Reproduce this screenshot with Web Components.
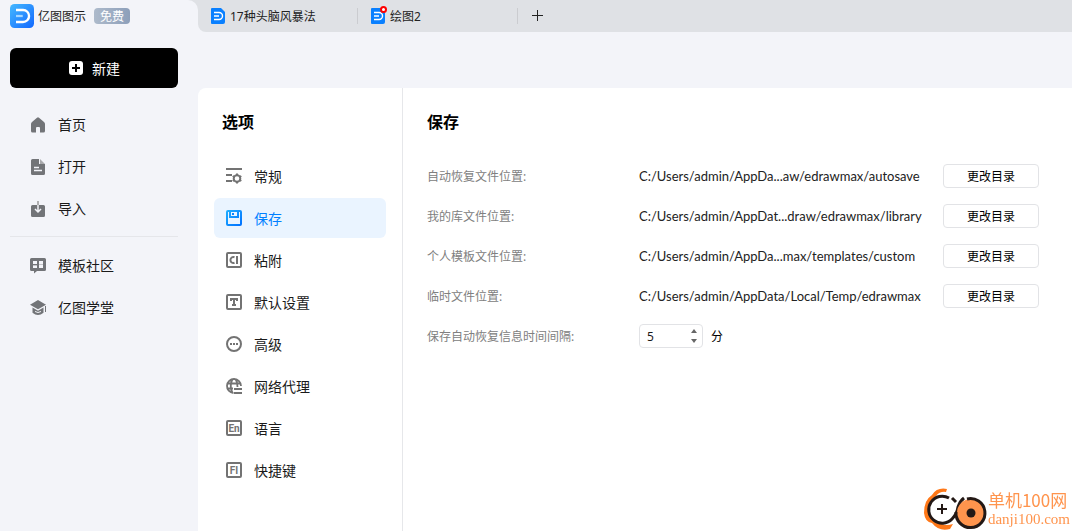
<!DOCTYPE html>
<html lang="zh-CN">
<head>
<meta charset="utf-8">
<title>亿图图示</title>
<style>
html, body { height: 100%; margin: 0; }
body { font: 14px/20px "Noto Sans", "Noto Sans CJK SC", sans-serif; color: #1a1a1a; background: #f3f4f9; }
</style>
</head>
<body>
<edraw-app></edraw-app>
<script>
const define = (name, html, init) => {
  const template = document.createElement('template');
  template.innerHTML = '<style>*{box-sizing:border-box}</style>' + html;
  customElements.define(name, class extends HTMLElement {
    constructor() {
      super();
      this.attachShadow({ mode: 'open' }).append(template.content.cloneNode(true));
    }
    connectedCallback() { if (init) init.call(this, this.shadowRoot); }
  });
};

const frame = '<rect x="1" y="1" width="14" height="14" rx="1" fill="none" stroke="currentColor" stroke-width="2"/>';
const letters = (t) => frame + `<text x="8" y="12" text-anchor="middle" font-family="Roboto, sans-serif" font-weight="700" font-size="10" fill="currentColor">${t}</text>`;
const icons = {
  home: '<path fill="currentColor" d="M7 .8a1.500 1.500 0 0 1 2 0l5 4.300q1 .9 1 2V14a1.500 1.500 0 0 1-1.500 1.500H10V11a1 1 0 0 0-1-1H7a1 1 0 0 0-1 1v4.500H2.500A1.500 1.500 0 0 1 1 14V7.100q0-1.100 1-2z"/>',
  file: '<path fill="currentColor" d="M2.500 0H9v4.500q0 .5.500.5H15v9.500a1.500 1.500 0 0 1-1.500 1.500h-11A1.500 1.500 0 0 1 1 14.500v-13A1.500 1.500 0 0 1 2.500 0z"/><path fill="#a9aaad" d="M10 0l5 5h-5z"/><path stroke="#f3f4f9" stroke-width="1.300" d="M4 8.500h5M4 11.500h8"/>',
  import: '<path fill="currentColor" d="M2.500 4h11A1.500 1.500 0 0 1 15 5.500v9a1.500 1.500 0 0 1-1.500 1.500h-11A1.500 1.500 0 0 1 1 14.500v-9A1.500 1.500 0 0 1 2.500 4z"/><path d="M8 0v4" stroke="#999" stroke-width="1.500"/><path d="M8 4v7M5 8l3 3 3-3" fill="none" stroke="#f3f4f9" stroke-width="1.500"/>',
  template: '<path fill="currentColor" d="M1.500 0h13A1.500 1.500 0 0 1 16 1.500v10a1.500 1.500 0 0 1-1.500 1.500H7l-3 2.500V13H1.500A1.500 1.500 0 0 1 0 11.500v-10A1.500 1.500 0 0 1 1.500 0z"/><path fill="#f3f4f9" d="M3 3h4v3H3zM3 7h4v3H3zM9 3h4v3H9zM9 7h4v3H9z"/><path fill="#c4c5c9" d="M3 7h4v1H3zM9 6h4v1H9z"/>',
  school: '<path fill="currentColor" d="M8 0l8 4.700-8 4.600L0 4.700zM2.500 7.500L8 10.700l5.500-3.200v5.200Q8 17.300 2.500 12.700zM15 6h1v6h-1z"/><path d="M5 11.500q3 2 6 0" fill="none" stroke="#f3f4f9"/>',
  general: '<path d="M0 1h16M0 7h6M0 13h6" fill="none" stroke="currentColor" stroke-width="2"/><circle cx="11" cy="10.500" r="3.300" fill="none" stroke="currentColor" stroke-width="2"/><path d="M11 5.500v2M11 13.500v2M6.700 8l1.700 1M13.600 12l1.700 1M6.700 13l1.700-1M13.600 9l1.700-1" stroke="currentColor" stroke-width="2"/>',
  save: '<defs><linearGradient id="g" gradientUnits="userSpaceOnUse" x2="16" y2="16"><stop stop-color="#20b0ff"/><stop offset="1" stop-color="#006fff"/></linearGradient></defs><rect x="1" y="1" width="14" height="14" rx="1" fill="none" stroke="url(#g)" stroke-width="2"/><path d="M4 1v6h8V1" fill="none" stroke="url(#g)" stroke-width="2"/><path d="M6 3h2v2H6z" fill="#0a84ff"/>',
  attach: frame + '<path d="M8.500 5.200a3 3 0 1 0 0 5.600M11 4v8" fill="none" stroke="currentColor" stroke-width="2"/>',
  defaults: frame + '<path d="M5 7V5h6v2M8 5v6M6 11h4" fill="none" stroke="currentColor" stroke-width="2"/>',
  advanced: '<circle cx="8" cy="8" r="7" fill="none" stroke="currentColor" stroke-width="2"/><path d="M4 7h2v2H4zM7 7h2v2H7zM10 7h2v2h-2z" fill="currentColor"/>',
  proxy: '<path d="M7.500 15A7 7 0 1 1 15 8M1.500 5.500h13M1.500 10.500H7M6.500 15Q3 8 6.500 1M9.500 1Q11.500 4 11.500 9" fill="none" stroke="currentColor" stroke-width="1.800"/><path d="M8 11h8M8 15h8" stroke="currentColor" stroke-width="2"/>',
  language: letters('En'),
  shortcut: letters('FI'),
  plus: '<rect x="1" y="1" width="14" height="14" rx="3" fill="#fff"/><path d="M8 4v8M4 8h8" stroke="#000" stroke-width="2"/>',
  add: '<path d="M7.500 2v11M2 7.500h11" stroke="#222" stroke-width="1"/>',
  doc: '<path d="M2 0h9l4 4v10a2 2 0 0 1-2 2H2a1 1 0 0 1-1-1V1a1 1 0 0 1 1-1z" fill="#0a80ff"/><path d="M4 4.500h5a3.500 3.500 0 0 1 0 7H4M4 8h5" fill="none" stroke="#fff" stroke-width="1.400"/>',
  logo: '<defs><linearGradient id="l" x2="1" y2="1"><stop stop-color="#45b9ff"/><stop offset="1" stop-color="#1268ff"/></linearGradient></defs><rect width="16" height="16" rx="3" fill="url(#l)"/><path d="M4 4h4.700a4 4 0 0 1 0 8H4" fill="none" stroke="#fff" stroke-width="1.600"/><path d="M4 8h4.500" stroke="#a5d6ff" stroke-width="1.500"/>'
};
const draw = (icon, name) => { icon.shadowRoot.querySelector('svg').innerHTML = icons[name]; };

define('ed-icon', `<style>
:host { display: block; flex: none; width: 16px; height: 16px; }
:host([name=logo]) { width: 24px; height: 24px; }
svg { display: block; width: 100%; height: 100%; overflow: visible; }
</style><svg viewBox="0 0 16 16" aria-hidden="true"></svg>`, function () {
  if (this.hasAttribute('name')) draw(this, this.getAttribute('name'));
});

const linkInit = function (root) {
  const icon = root.querySelector('ed-icon');
  customElements.upgrade(icon);
  icon.setAttribute('name', this.getAttribute('icon'));
  draw(icon, this.getAttribute('icon'));
};

define('side-link', `<style>
:host { display: block; }
a { display: flex; align-items: center; gap: 12px; height: 42px; padding-left: 20px; color: inherit; text-decoration: none; }
ed-icon { color: #727478; }
</style><a href="#"><ed-icon></ed-icon><span><slot></slot></span></a>`, linkInit);

define('option-link', `<style>
:host { display: block; }
a { display: flex; align-items: center; gap: 12px; height: 40px; padding-left: 12px; border-radius: 6px; color: inherit; text-decoration: none; }
ed-icon { color: #737373; }
span { padding-top: 2px; }
:host([selected]) a { background: #eaf4ff; color: #0080ff; }
</style><a href="#"><ed-icon></ed-icon><span><slot></slot></span></a>`, linkInit);

define('app-sidebar', `<style>
:host { display: flex; flex-direction: column; flex: none; width: 198px; padding: 4px 20px 0 10px; background: #f3f4f9; border-top-right-radius: 10px; }
header { display: flex; align-items: center; height: 24px; font-size: 12px; gap: 4px; }
.title, .new { padding-top: 2px; }
.free { margin-left: 4px; width: 36px; height: 16px; line-height: 18px; text-align: center; color: #fff; border-radius: 4px; background: linear-gradient(90deg, #adbacb, #8d9fba); }
button { display: flex; align-items: center; justify-content: center; gap: 8px; height: 40px; margin: 20px 0 16px; border: 0; border-radius: 6px; background: #000; color: #fff; font: inherit; }
hr { width: 100%; margin: 6px 0 8px; border: 0; border-top: 1px solid #e5e6ea; }
</style>
<header><ed-icon name="logo"></ed-icon><span class="title">亿图图示</span><span class="free">免费</span></header>
<button type="button"><ed-icon name="plus"></ed-icon><span class="new">新建</span></button>
<nav><side-link icon="home">首页</side-link><side-link icon="file">打开</side-link><side-link icon="import">导入</side-link></nav>
<hr>
<nav><side-link icon="template">模板社区</side-link><side-link icon="school">亿图学堂</side-link></nav>`);

define('doc-tab', `<style>
:host { display: block; width: 160px; }
button { display: flex; align-items: center; gap: 4px; width: 100%; height: 16px; padding: 0 0 0 12px; border: 0; border-right: 1px solid #cbccd0; background: none; color: #222; font: inherit; }
.mark { position: relative; }
.text { padding-top: 2px; }
i { display: none; position: absolute; right: -1px; top: -2px; width: 7px; height: 7px; border: 2px solid #f00; border-radius: 50%; background: #fff; }
:host([modified]) i { display: block; }
</style><button type="button"><span class="mark"><ed-icon name="doc"></ed-icon><i></i></span><span class="text"><slot></slot></span></button>`);

define('tab-bar', `<style>
:host { display: flex; align-items: center; height: 32px; background: #dfe1e5; border-bottom-left-radius: 8px; font-size: 12px; }
.add { padding: 0 12px; border: 0; background: none; }
</style><doc-tab>17种头脑风暴法</doc-tab><doc-tab modified>绘图2</doc-tab><button class="add" type="button" aria-label="新建标签"><ed-icon name="add"></ed-icon></button>`);

define('option-nav', `<style>
:host { display: block; flex: none; width: 205px; padding: 24px 16px; border-right: 1px solid #e6e7ea; }
h2 { margin: 0 0 24px 8px; font-size: 16px; line-height: 20px; color: #000; }
nav { display: grid; gap: 2px; }
</style><h2>选项</h2>
<nav>
<option-link icon="general">常规</option-link>
<option-link icon="save" selected>保存</option-link>
<option-link icon="attach">粘附</option-link>
<option-link icon="defaults">默认设置</option-link>
<option-link icon="advanced">高级</option-link>
<option-link icon="proxy">网络代理</option-link>
<option-link icon="language">语言</option-link>
<option-link icon="shortcut">快捷键</option-link>
</nav>`);

define('setting-row', `<style>
:host { display: grid; grid-template-columns: 212px 304px 96px; align-items: center; height: 24px; }
.label { padding-top: 2px; color: #808080; }
.path { font-family: Lato, "Noto Sans", sans-serif; font-size: 13px; white-space: nowrap; color: #222; }
button { height: 24px; padding: 2px 0 0; border: 1px solid #e2e3e6; border-radius: 4px; background: #fff; color: #000; font: inherit; }
</style><span class="label"><slot name="label"></slot></span><span class="path"><slot></slot></span><button type="button">更改目录</button>`);

define('interval-row', `<style>
:host { display: grid; grid-template-columns: 212px 64px auto; align-items: center; height: 24px; }
label { padding-top: 2px; color: #808080; }
.spin { position: relative; height: 24px; }
input { width: 100%; height: 24px; padding: 0 20px 0 7px; border: 1px solid #e2e3e6; border-radius: 4px; background: #fff; color: inherit; font: inherit; appearance: textfield; -moz-appearance: textfield; }
input::-webkit-inner-spin-button { appearance: none; -webkit-appearance: none; margin: 0; }
.steps { position: absolute; right: 5px; top: 2px; display: grid; }
button { display: grid; place-items: center; width: 8px; height: 10px; padding: 0; border: 0; background: none; }
svg { display: block; }
.unit { padding: 2px 0 0 8px; color: #000; }
</style><label for="minutes">保存自动恢复信息时间间隔:</label>
<div class="spin"><input id="minutes" type="number" value="5"><div class="steps">
<button type="button" aria-label="增加"><svg width="6" height="4"><path d="M0 4L3 0l3 4z" fill="#666"/></svg></button>
<button type="button" aria-label="减少"><svg width="6" height="4"><path d="M0 0l3 4 3-4z" fill="#666"/></svg></button></div></div>
<span class="unit">分</span>`, function (root) {
  const input = root.querySelector('input');
  const [up, down] = root.querySelectorAll('button');
  up.onclick = () => input.stepUp();
  down.onclick = () => input.stepDown();
});

define('save-panel', `<style>
:host { display: block; flex: 1; min-width: 0; padding: 24px; font-size: 12px; }
h2 { margin: 0 0 32px; font-size: 16px; line-height: 20px; color: #000; }
.rows { display: grid; gap: 16px; }
</style><h2>保存</h2><div class="rows">
<setting-row><span slot="label">自动恢复文件位置:</span>C:/Users/admin/AppDa...aw/edrawmax/autosave</setting-row>
<setting-row><span slot="label">我的库文件位置:</span>C:/Users/admin/AppDat...draw/edrawmax/library</setting-row>
<setting-row><span slot="label">个人模板文件位置:</span>C:/Users/admin/AppDa...max/templates/custom</setting-row>
<setting-row><span slot="label">临时文件位置:</span>C:/Users/admin/AppData/Local/Temp/edrawmax</setting-row>
<interval-row></interval-row></div>`);

define('site-mark', `<style>
:host { position: fixed; right: 2px; bottom: 0; display: flex; align-items: center; color: #ff944d; }
svg { display: block; }
.name { font: 17px/20px "Noto Sans CJK SC", sans-serif; }
.url { font: 15px/18px "Liberation Serif", serif; }
.name, .url { display: block; white-space: nowrap; }
</style><svg width="64" height="44" viewBox="0 0 64 44" aria-hidden="true">
<path d="M23 2Q13 0 8 8Q0 13 0 26Q1 35 8 36Q15 45 26 42L29 37Q19 40 13 34Q4 31 4 23Q4 14 12 9Q16 4 22 5z" fill="#ff7818"/>
<circle cx="18" cy="22" r="13" fill="#fff"/>
<path d="M25 11A13.500 13.500 0 1 0 28 32Q33 27 34 20Q36 14 40 11" fill="none" stroke="#231815" stroke-width="3"/>
<path d="M18 17v10M13 22h10" stroke="#231815" stroke-width="2"/>
<circle cx="47" cy="26" r="14" fill="#ff944d"/><path d="M43 12A14.500 14.500 0 1 1 32 25M28 11l4 4" fill="none" stroke="#231815" stroke-width="3"/>
<circle cx="47" cy="26" r="4.500" fill="#231815"/></svg>
<div><span class="name">单机100网</span><span class="url">danji100.com</span></div>`);

define('edraw-app', `<style>
:host { display: flex; min-height: 100vh; background: linear-gradient(#dfe1e5 0 16px, #f3f4f9 16px); }
main { flex: 1; min-width: 0; display: flex; flex-direction: column; }
.page { flex: 1; display: flex; margin-top: 56px; background: #fff; border-top-left-radius: 8px; }
</style><app-sidebar></app-sidebar><main><tab-bar></tab-bar><div class="page"><option-nav></option-nav><save-panel></save-panel></div></main><site-mark></site-mark>`);
</script>
</body>
</html>
